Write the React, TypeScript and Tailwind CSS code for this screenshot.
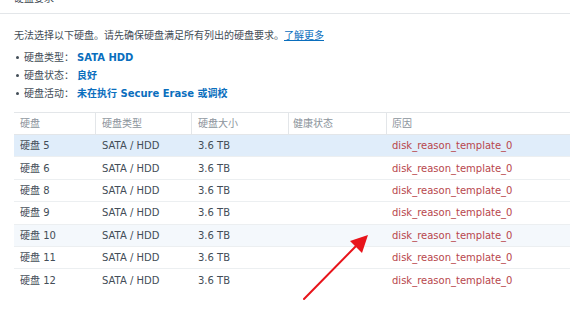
import React from 'react';

const font = { fontFamily: '"DejaVu Sans", "Noto Sans CJK SC", sans-serif' };

const disks = ['5', '6', '8', '9', '10', '11', '12'];

const requirements = [
  { label: '硬盘类型：', value: 'SATA HDD' },
  { label: '硬盘状态：', value: '良好' },
  { label: '硬盘活动：', value: '未在执行 Secure Erase 或调校' },
];

function Arrow() {
  return (
    <svg className="absolute left-[296px] top-[228px]" width="80" height="80" viewBox="0 0 80 80">
      <line x1="8" y1="71" x2="62" y2="16" stroke="#e8141b" strokeWidth="2" strokeLinecap="round" />
      <polygon points="72,7 54,13 66,25" fill="#e8141b" />
    </svg>
  );
}

export default function App() {
  return (
    <div className="relative w-[570px] h-[315px] overflow-hidden bg-white text-[10px] text-[#434d57]" style={font}>
      <div className="h-[14px] border-b border-[#e3e6e9] pl-[14px] overflow-hidden">
        <div className="-mt-[8px] leading-[14px] text-[#3c4650]">硬盘要求</div>
      </div>

      <div className="pl-[14px] pt-[14px]">
        <div className="h-[16px] leading-[16px] whitespace-nowrap">
          无法选择以下硬盘。请先确保硬盘满足所有列出的硬盘要求。
          <span className="text-[#0a6ebd] underline">了解更多</span>
        </div>
        <ul className="mt-[4px]">
          {requirements.map(r => (
            <li key={r.label} className="flex items-center h-[18px] whitespace-nowrap">
              <span className="w-[3px] h-[3px] rounded-full bg-[#434d57] ml-[2px] mr-[5px]" />
              <span className="w-[53px]">{r.label}</span>
              <span className="font-bold text-[#0a6ebd]">{r.value}</span>
            </li>
          ))}
        </ul>
      </div>

      <div className="ml-[14px] mt-[10px] border-t border-[#e3e6e9]">
        <div className="flex h-[22px] items-center text-[#8c949c] border-b border-[#e3e6e9]">
          <div className="w-[82px] pl-[6px] h-full flex items-center border-r border-[#e3e6e9]">硬盘</div>
          <div className="w-[96px] pl-[6px] h-full flex items-center border-r border-[#e3e6e9]">硬盘类型</div>
          <div className="w-[97px] pl-[6px] h-full flex items-center border-r border-[#e3e6e9]">硬盘大小</div>
          <div className="w-[98px] pl-[4px] h-full flex items-center border-r border-[#e3e6e9]">健康状态</div>
          <div className="flex-1 pl-[5px]">原因</div>
        </div>
        {disks.map((d, i) => (
          <div
            key={d}
            className={`flex h-[22.4px] items-center ${i < disks.length - 1 ? 'border-b border-[#eceff1]' : ''} ${
              i === 0 ? 'bg-[#e0edfa]' : i === 4 ? 'bg-[#f4f8fc]' : ''
            }`}
          >
            <div className="w-[82px] pl-[6px]">硬盘 {d}</div>
            <div className="w-[96px] pl-[6px]">SATA / HDD</div>
            <div className="w-[97px] pl-[6px]">3.6 TB</div>
            <div className="w-[98px] pl-[4px]"></div>
            <div className="flex-1 pl-[5px] text-[#b8464c]">disk_reason_template_0</div>
          </div>
        ))}
      </div>

      <Arrow />
    </div>
  );
}
